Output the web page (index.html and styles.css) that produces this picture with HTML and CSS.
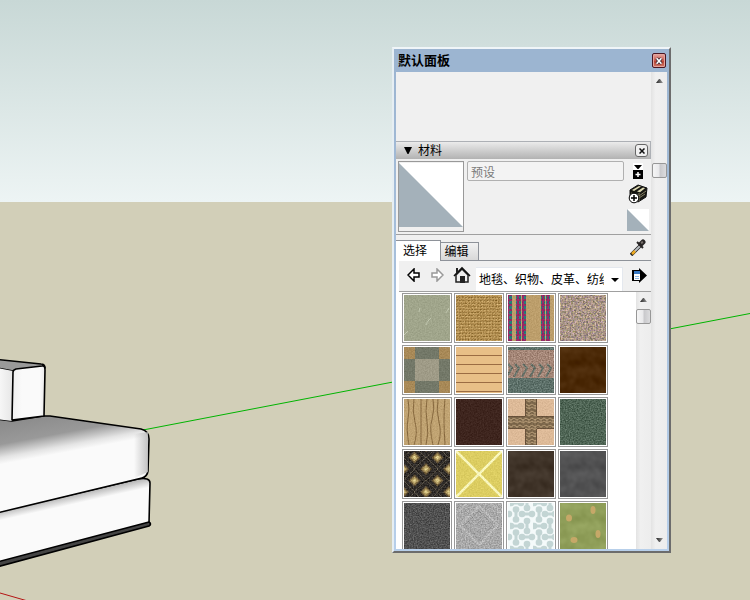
FILE: index.html
```html
<!DOCTYPE html>
<html lang="zh-CN">
<head>
<meta charset="utf-8">
<title>默认面板</title>
<link rel="stylesheet" href="styles.css">
</head>
<body>
<svg class="scene" viewBox="0 0 750 600" preserveAspectRatio="xMinYMin slice" aria-hidden="true">
  <defs>
    <linearGradient id="sky" x2="0" y2="1"><stop stop-color="#c8d8d6"/><stop offset="1" stop-color="#edf4f4"/></linearGradient>
    <linearGradient id="cushion" gradientUnits="userSpaceOnUse" x1="0" y1="420" x2="8" y2="463"><stop stop-color="#8a8a8a"/><stop offset=".55" stop-color="#999"/><stop offset=".85" stop-color="#e4e4e4"/><stop offset="1" stop-color="#fafafa"/></linearGradient>
    <linearGradient id="side" x2="1"><stop stop-color="#f0f0f0"/><stop offset=".3" stop-color="#fafafa"/><stop offset=".85" stop-color="#fafafa"/><stop offset="1" stop-color="#e8e8e8"/></linearGradient>
    <linearGradient id="face"><stop stop-color="#fafafa"/><stop offset="1" stop-color="#e6e6e6"/></linearGradient>
    <linearGradient id="base" gradientUnits="userSpaceOnUse" x1="0" y1="511" x2="2" y2="520"><stop stop-color="#b8b8b8"/><stop offset="1" stop-color="#fafafa"/></linearGradient>
    <linearGradient id="edge" gradientUnits="userSpaceOnUse" x1="134" y1="0" x2="150" y2="0"><stop stop-color="#bbb" stop-opacity="0"/><stop offset="1" stop-color="#bbb"/></linearGradient>
  </defs>
  <path fill="#d2cfb8" d="M0 0h750v600H0z"/>
  <path fill="url(#sky)" d="M0 0h750v202H0z"/>
  <path stroke="#00b400" d="M143 430 750 313.500"/>
  <path stroke="#b41414" d="M0 593 26 600.500"/>
  <g stroke="#000" stroke-width="1.600" stroke-linejoin="round">
    <path fill="url(#base)" d="M-3 512 138 479Q150 477 150 483L149 523-3 563z"/>
    <path fill="#444" d="M-3 562 149 522Q152 524 149 526L-3 567z"/>
    <path fill="url(#cushion)" d="M-3 419 12 421 43 416 50 416 141 429Q149 431 149 439L148 471Q147 477 142 478L-3 513z"/>
    <path fill="url(#edge)" stroke="none" d="M134 434 148 432V472L134 478z"/>
    <path fill="#999" d="M-3 359.500 41 364Q45 364 45 368L13 371-3 368z"/>
    <path fill="url(#face)" stroke="none" d="M-3 368 13 371 12 421-3 419z"/>
    <path fill="url(#side)" d="M16 369 42 366Q45 365 45 370L44 416 12 420 13 372Q13 370 16 369z"/>
  </g>
</svg>

<svg class="defs" aria-hidden="true">
  <defs>
    <filter id="fine" x="0" y="0" width="1" height="1" color-interpolation-filters="sRGB"><feTurbulence type="fractalNoise" baseFrequency=".7" numOctaves="2" seed="4"/><feColorMatrix values="1 0 0 0 0 1 0 0 0 0 1 0 0 0 0 0 0 0 0 1" result="n"/><feComposite in="SourceGraphic" in2="n" operator="arithmetic" k2="1" k3=".14" k4="-.07"/></filter>
    <filter id="coarse" x="0" y="0" width="1" height="1" color-interpolation-filters="sRGB"><feTurbulence type="fractalNoise" baseFrequency=".75" numOctaves="2" seed="8"/><feColorMatrix values="1 0 0 0 0 1 0 0 0 0 1 0 0 0 0 0 0 0 0 1" result="n"/><feComposite in="SourceGraphic" in2="n" operator="arithmetic" k2="1" k3=".36" k4="-.18"/></filter>
    <filter id="speckle" x="0" y="0" width="1" height="1" color-interpolation-filters="sRGB"><feTurbulence type="fractalNoise" baseFrequency=".6" numOctaves="2" seed="3"/><feColorMatrix values="1 .2 0 0 -.1 .8 .4 0 0 -.1 .7 0 .5 0 -.1 0 0 0 0 1" result="n"/><feComposite in="SourceGraphic" in2="n" operator="arithmetic" k2="1" k3=".7" k4="-.35"/></filter>
    <filter id="cloud" x="0" y="0" width="1" height="1" color-interpolation-filters="sRGB"><feTurbulence type="fractalNoise" baseFrequency=".1" numOctaves="2" seed="5"/><feColorMatrix values="1 0 0 0 0 1 0 0 0 0 1 0 0 0 0 0 0 0 0 1" result="n"/><feComposite in="SourceGraphic" in2="n" operator="arithmetic" k2="1" k3=".12" k4="-.06"/></filter>
    <pattern id="weave" width="3" height="3" patternUnits="userSpaceOnUse"><path fill="#b28e51" d="M0 0h3v3H0z"/><path fill="#99783d" d="M0 2h2v1H0z"/><path fill="#c3a163" d="M1 0h2v1H1z"/></pattern>
    <pattern id="band" width="5" height="5" patternUnits="userSpaceOnUse"><path fill="#952a65" d="M0 0h5v5H0z"/><path fill="#277b78" d="M1 1h3v3H1z"/></pattern>
    <pattern id="diamond" width="23" height="23" x="-1" y="-5" patternUnits="userSpaceOnUse">
      <path fill="#302c29" d="M0 0h23v23H0z"/>
      <path stroke="#665d4c" stroke-dasharray="2 1" d="M0 11 12 23M11 0 23 12M0 12 12 0M11 23 23 11"/>
      <path fill="#6b5838" d="m11.500 5.500 6 6-6 6-6-6zM0-6l6 6-6 6-6-6zM23-6l6 6-6 6-6-6zM0 17l6 6-6 6-6-6zM23 17l6 6-6 6-6-6z"/>
      <path fill="#b09a5f" d="m11.500 7.500 4 4-4 4-4-4zM0-4l4 4-4 4-4-4zM23-4l4 4-4 4-4-4zM0 19l4 4-4 4-4-4zM23 19l4 4-4 4-4-4z"/>
      <path fill="#dcca8a" d="m11.500 9.500 2 2-2 2-2-2zM0-2l2 2-2 2-2-2zM23-2l2 2-2 2-2-2zM0 21l2 2-2 2-2-2zM23 21l2 2-2 2-2-2z"/>
    </pattern>
    <g id="bone"><path stroke="#c3d5d4" stroke-width="3" d="M-5 0H5"/><circle cx="-5" r="3.300"/><circle cx="5" r="3.300"/></g>
    <pattern id="bones" width="23" height="23" x="2" y="0" patternUnits="userSpaceOnUse">
      <path fill="#f4fafa" d="M0 0h23v23H0z"/>
      <g fill="#c3d5d4">
        <use href="#bone" x="6" y="0"/><use href="#bone" x="6" y="23"/>
        <use href="#bone" x="17" y="11"/><use href="#bone" x="-6" y="11"/>
        <use href="#bone" transform="translate(6 11.500) rotate(90)"/>
        <use href="#bone" transform="translate(17 0) rotate(90)"/>
        <use href="#bone" transform="translate(17 23) rotate(90)"/>
      </g>
    </pattern>
    <pattern id="braid" width="6" height="7" patternUnits="userSpaceOnUse"><path fill="#7b664a" d="M0 0h6v7H0z"/><path fill="none" stroke="#b79c78" d="m0 1 3 2 3-2M0 5l3 2 3-2M3 0v2"/></pattern>
    <linearGradient id="arrow" x2="1"><stop stop-color="#222"/><stop offset="1" stop-color="#999"/></linearGradient>
    <symbol id="up" viewBox="0 0 7 4"><path fill="url(#arrow)" d="M3 0h1l3 4H0z"/></symbol>
    <symbol id="down" viewBox="0 0 7 4"><path fill="url(#arrow)" d="M0 0h7L4 4H3z"/></symbol>
  </defs>
</svg>

<main class="panel">
  <header class="titlebar">
    <h1>默认面板</h1>
    <button class="close" aria-label="关闭"><svg viewBox="0 0 10 9"><path stroke="#3a2530" stroke-width="4" d="m2 1 6 7m0-7L2 8"/><path stroke="#fff" stroke-width="2" d="m2 1 6 7m0-7L2 8"/></svg></button>
  </header>
  <div class="body">
    <div class="content">
      <div class="blank"></div>
      <div class="section">
        <svg class="fold" viewBox="0 0 8 7"><path d="M0 0h8L4.500 7h-1z"/></svg>
        <h2>材料</h2>
        <button class="dismiss" aria-label="关闭材料"><svg viewBox="0 0 6 6"><path stroke="#111" stroke-width="1.500" d="m.5.5 5 5m0-5-5 5"/></svg></button>
      </div>
      <section class="current">
        <div class="preview"><svg viewBox="0 0 64 65" preserveAspectRatio="none"><path fill="#fff" d="M0 0h64v65H0z"/><path fill="#a4b1ba" d="M0 0 64 65H0z"/></svg></div>
        <input class="name" type="text" value="预设" aria-label="材料名称" disabled>
        <div class="actions">
          <button aria-label="显示辅助面板"><svg width="12" height="16" viewBox="0 0 12 16"><path fill="#fff" d="M1 0h10v7H1z"/><path fill="#000" d="M2 2h8L6.500 6h-1zM1 7h10v9H1z"/><path stroke="#fff" stroke-width="1.500" d="M6 9v5M3.500 11.500h5"/></svg></button>
          <button aria-label="创建材料"><svg width="20" height="21" viewBox="0 0 20 21"><path fill="#171713" stroke="#111" d="m2 6 8-5 9 3-1 9-8 5-8-4z"/><path fill="#dedab3" d="m4 6 7-4 2 .6-7 4.400zM9 7.500l6-4 2 .7-5 4z"/><path fill="none" stroke="#858064" d="m3 9 8 3 7-5M11 14l6-4M11 9v8"/><circle cx="6" cy="14" r="4.800" fill="#fff" stroke="#000"/><path stroke="#000" stroke-width="1.500" d="M6 11v6M3 14h6"/></svg></button>
          <button aria-label="默认材料"><svg width="22" height="22" viewBox="0 0 22 22"><path fill="#fff" d="M0 0h22v22H0z"/><path fill="#a4b1ba" d="M0 0 22 22H0z"/></svg></button>
        </div>
      </section>
      <nav class="tabs">
        <button class="tab active">选择</button><button class="tab">编辑</button>
        <button class="dropper" aria-label="提取材质"><svg width="16" height="17" viewBox="0 0 16 17"><path stroke="#222" stroke-width="3.500" d="M1 16 10 7"/><path stroke="#b9bec3" stroke-width="2" d="M3 14 10 7"/><path stroke="#efaa20" stroke-width="2.500" d="m2 15 3-3"/><path stroke="#292626" stroke-width="2" d="m7 3 6 6"/><path stroke="#292626" stroke-width="5" stroke-linecap="round" d="m11 5 2-2"/><path stroke="#77706c" stroke-width="2" d="m11 4 2-1"/></svg></button>
      </nav>
      <div class="library">
        <div class="toolbar">
          <button aria-label="后退"><svg width="14" height="14" viewBox="0 0 14 14"><path fill="#fff" stroke="#000" stroke-width="1.500" d="m1 7 6-6v4h5v4H7v4z"/></svg></button>
          <button aria-label="前进"><svg width="14" height="14" viewBox="0 0 14 14"><path fill="#fff" stroke="#999" stroke-width="1.500" d="M13 7 7 1v4H2v4h5v4z"/></svg></button>
          <button aria-label="在模型中"><svg width="18" height="18" viewBox="0 0 18 18"><path fill="#eee" stroke="#222" stroke-width="1.500" d="M3 9v7h12V9L9 3z"/><path fill="none" stroke="#111" stroke-width="1.600" d="m1 10 8-8 8 8"/><path fill="#222" d="M3 2h2v4L3 8zM7 10h5v7H7z"/></svg></button>
          <div class="picker"><select aria-label="材料库"><option>地毯、织物、皮革、纺织品和墙纸</option></select><svg class="caret" viewBox="0 0 8 4"><path d="M0 0h8L4 4z"/></svg></div>
          <button class="details" aria-label="详细信息"><svg width="15" height="15" viewBox="0 0 15 15"><path d="M7 0v2H0v11h7v2l8-7.500z"/><path fill="#fff" d="M2 3h6v9H2z"/><path fill="#3779c5" d="M2 3h6v3H2z"/><path stroke="#8bb9e8" d="M3 8.500h4M3 10.500h4"/></svg></button>
        </div>
        <div class="browser">
          <div class="swatches">
            <button aria-label="浅绿地毯"><svg viewBox="0 0 46 46"><g filter="url(#fine)"><path fill="#a0a58b" d="M0 0h46v46H0z"/><path fill="none" stroke="#c1c7af" d="m22 30 2-4 3-3M15 17l1-4M42 18l3-5M0 40l4-4"/></g></svg></button>
            <button aria-label="编织地毯"><svg viewBox="0 0 46 46"><path filter="url(#coarse)" fill="url(#weave)" d="M0 0h46v46H0z"/></svg></button>
            <button aria-label="条纹织物"><svg viewBox="0 0 46 46"><g filter="url(#fine)"><path fill="#bc9e6b" d="M0 0h46v46H0z"/><path fill="url(#band)" d="M0 0h4v46H0zM8 0h5v46H8zM14 0h4v46h-4zM33 0h4v46h-4zM38 0h4v46h-4z"/></g></svg></button>
            <button aria-label="斑点地毯"><svg viewBox="0 0 46 46"><path filter="url(#speckle)" fill="#a99587" d="M0 0h46v46H0z"/></svg></button>
            <button aria-label="方格地毯"><svg viewBox="0 0 46 46"><g filter="url(#fine)"><path fill="#a88957" d="M0 0h46v46H0z"/><path fill="#737868" d="M11 0h24v46H11zM0 12h46v22H0z"/><path fill="#9f9b87" d="M11 12h24v22H11z"/></g></svg></button>
            <button aria-label="横纹墙纸"><svg viewBox="0 0 46 46"><path fill="#e8bf87" d="M0 0h46v46H0z"/><path stroke="#9b6c43" d="M0 8.500h46M0 17.500h46M0 26.500h46M0 35.500h46M0 44.500h46"/></svg></button>
            <button aria-label="花纹地毯"><svg viewBox="0 0 46 46"><g filter="url(#coarse)"><path fill="#a58778" d="M0 0h46v46H0z"/><path fill="#5d7069" d="M0 0h46v3H0zM0 31h46v15H0z"/><path fill="none" stroke="#667168" stroke-width="2" d="m0 17 4 4-4 7M7 17l4 4-5 9M15 17l4 4-5 9M23 17l4 4-5 9M31 17l4 4-5 9M39 17l4 4-5 9"/></g></svg></button>
            <button aria-label="棕色皮革"><svg viewBox="0 0 46 46"><path filter="url(#cloud)" fill="#4b2907" d="M0 0h46v46H0z"/></svg></button>
            <button aria-label="木纹墙纸"><svg viewBox="0 0 46 46"><g filter="url(#fine)"><path fill="#c0a372" d="M0 0h46v46H0z"/><path fill="none" stroke="#87693f" d="M4 0q2 10 0 20t1 26M10 0q-2 12 1 23t-1 23M17 0v46M23 0q-2 12 0 23t-1 23M29 0q2 10-1 20t1 26M34 0q-2 12 1 23t-1 23M41 0q-2 18 0 46"/></g></svg></button>
            <button aria-label="深棕皮革"><svg viewBox="0 0 46 46"><path filter="url(#fine)" fill="#3e251e" d="M0 0h46v46H0z"/></svg></button>
            <button aria-label="十字花纹"><svg viewBox="0 0 46 46"><g filter="url(#fine)"><path fill="#ddba98" d="M0 0h46v46H0z"/><path fill="url(#braid)" d="M17 0h12v46H17zM0 17h46v13H0z"/><path stroke="#68513a" d="M17.500 0v17M28.500 0v17M17.500 30v16M28.500 30v16M0 17.500h17M0 29.500h17M29 17.500h17M29 29.500h17"/></g></svg></button>
            <button aria-label="深绿地毯"><svg viewBox="0 0 46 46"><path filter="url(#coarse)" fill="#4f6555" d="M0 0h46v46H0z"/></svg></button>
            <button aria-label="菱形地毯"><svg viewBox="0 0 46 46"><path filter="url(#coarse)" fill="url(#diamond)" d="M0 0h46v46H0z"/></svg></button>
            <button aria-label="黄色织物"><svg viewBox="0 0 46 46"><g filter="url(#fine)"><path fill="#dccd61" d="M0 0h46v46H0z"/><path stroke="#f8f6bd" stroke-width="2.500" d="m0 0 46 46M46 0 0 46"/></g></svg></button>
            <button aria-label="黑棕皮革"><svg viewBox="0 0 46 46"><path filter="url(#cloud)" fill="#403429" d="M0 0h46v46H0z"/></svg></button>
            <button aria-label="灰色皮革"><svg viewBox="0 0 46 46"><path filter="url(#cloud)" fill="#525253" d="M0 0h46v46H0z"/></svg></button>
            <button aria-label="深灰地毯"><svg viewBox="0 0 46 46"><path filter="url(#coarse)" fill="#515151" d="M0 0h46v46H0z"/></svg></button>
            <button aria-label="浅灰地毯"><svg viewBox="0 0 46 46"><g filter="url(#coarse)"><path fill="#a8a8a8" d="M0 0h46v46H0z"/><path fill="none" stroke="#b8b8b8" stroke-width="2" d="m23 3 19 19-19 20L4 22zM0 11 11 0M35 0l11 11"/><path fill="none" stroke="#989898" d="m23 8 14 14-14 15L9 22z"/></g></svg></button>
            <button aria-label="骨形花纹"><svg viewBox="0 0 46 46"><path fill="url(#bones)" d="M0 0h46v46H0z"/></svg></button>
            <button aria-label="落叶地毯"><svg viewBox="0 0 46 46"><path filter="url(#cloud)" fill="#8f9e59" d="M0 0h46v46H0z"/><g fill="#c6a868"><ellipse cx="33" cy="7" rx="2.500" ry="4"/><ellipse cx="9" cy="15" rx="3" ry="3.500"/><ellipse cx="38" cy="31" rx="2.500" ry="4"/><ellipse cx="14" cy="37" rx="3.500" ry="3"/></g></svg></button>
          </div>
          <div class="scrollbar inner"><svg class="tip"><use href="#up"/></svg><div class="thumb"></div></div>
        </div>
      </div>
    </div>
    <div class="scrollbar outer"><svg class="tip"><use href="#up"/></svg><div class="thumb"></div><svg class="tip end"><use href="#down"/></svg></div>
  </div>
</main>
</body>
</html>
```
FILE: styles.css
```css
* { box-sizing: border-box; }

body {
  margin: 0;
  height: 100vh;
  overflow: hidden;
  position: relative;
  font: 12px/16px "Liberation Sans", "Noto Sans CJK SC", sans-serif;
  color: #000;
}

button, input, select { font: inherit; color: inherit; margin: 0; }
button { padding: 0; border: 0; background: none; }
svg { display: block; fill: none; }
h1, h2 { margin: 0; }

.scene { width: 100%; height: 100%; }
.defs { position: absolute; width: 0; height: 0; }
.fold, .caret, .details svg { fill: #000; }

.panel {
  position: absolute;
  top: 47px;
  right: 79px;
  bottom: 47px;
  width: 279px;
  display: flex;
  flex-direction: column;
  border: 2px solid;
  border-color: #f0f5f8 #6c6c6c #6c6c6c #e6eef3;
  background: linear-gradient(#9cb5d1 24px, #b7cfea);
  padding: 0 2px 2px;
}

.titlebar {
  display: flex;
  flex: none;
  align-items: center;
  justify-content: space-between;
  height: 23px;
  padding: 0 1px 0 2px;
}
.titlebar h1 { padding-top: 1px; font-size: 13px; font-weight: 700; }

.close {
  width: 14px;
  height: 15px;
  display: grid;
  place-items: center;
  border: 1px solid #4a1723;
  border-radius: 2px;
  background: linear-gradient(#e5aaa4, #c9584c 50%, #b83e2e 51%, #d2796a);
  box-shadow: inset 0 0 0 1px #e3a49d;
}
.close svg { width: 8px; height: 8px; }

.body { display: flex; flex: 1; min-height: 0; background: #f0f0f0; }
.content { display: flex; flex: 1; min-width: 0; flex-direction: column; }
.blank { flex: none; height: 69px; }

.section {
  display: flex;
  flex: none;
  align-items: center;
  height: 18px;
  padding: 0 2px 0 8px;
  border: 1px solid #adb0b5;
  border-width: 1px 1px 0 0;
  background: linear-gradient(#ebebeb, #b2b2b2);
}
.fold { width: 8px; height: 7px; }
.section h2 { margin-left: 6px; font-size: 12px; font-weight: 400; }
.dismiss {
  width: 13px;
  height: 13px;
  margin-left: auto;
  display: grid;
  place-items: center;
  border: 1px solid #666;
  border-radius: 3px;
  background: #f0f0f0;
}
.dismiss svg { width: 6px; height: 6px; }

.current {
  display: flex;
  flex: none;
  align-items: flex-start;
  height: 76px;
  padding: 2px;
  gap: 3px;
  border-bottom: 1px solid #a0a0a0;
}
.preview { width: 66px; height: 71px; border: 1px solid #999; padding: 1px 0 4px; }
.preview svg { width: 100%; height: 100%; }
.name {
  flex: 1;
  min-width: 0;
  height: 20px;
  padding: 0 3px;
  border: 1px solid #b0b0b0;
  border-radius: 2px;
  background: #f3f3f3;
  color: #7a7a7a;
}
.actions {
  display: flex;
  flex-direction: column;
  align-items: center;
  justify-content: space-between;
  height: 71px;
  padding: 2px 0 1px;
}

.tabs {
  display: flex;
  flex: none;
  align-items: flex-end;
  height: 26px;
  box-shadow: inset 0 -1px #8e9299;
}
.tab { width: 38px; height: 19px; padding-right: 6px; border: 1px solid #8e9299; border-left: 0; background: linear-gradient(#f2f2f2, #d8d8d8); }
.tab.active { width: 45px; height: 21px; border-bottom: 0; background: #fff; }
.dropper { margin: 0 5px 5px auto; }

.library { display: flex; flex: 1; min-height: 0; flex-direction: column; padding-left: 3px; background: #fff; }
.toolbar {
  display: flex;
  flex: none;
  align-items: center;
  gap: 9px;
  height: 31px;
  padding: 0 4px 0 8px;
  border-bottom: 1px solid #a0a0a0;
  background: #f0f0f0;
}
.toolbar > button { padding-bottom: 2px; }
.picker { position: relative; flex: 1; min-width: 0; align-self: flex-end; margin-left: -4px; }
.picker select {
  display: block;
  appearance: none;
  width: 100%;
  height: 24px;
  padding: 0 18px 0 3px;
  border: 1px solid #e4e8ee;
  border-width: 1px 1px 0 0;
  border-radius: 0;
  background: #fff;
}
.caret { position: absolute; right: 4px; top: 11px; width: 8px; height: 4px; pointer-events: none; }

.browser { display: flex; flex: 1; min-height: 0; overflow: hidden; }
.swatches {
  display: grid;
  flex: 1;
  grid-template-columns: repeat(auto-fill, 50px);
  grid-auto-rows: 50px;
  gap: 2px;
  padding: 1px 3px;
}
.swatches button { border: 1px solid #999; padding: 1px; }
.swatches svg { width: 46px; height: 46px; }

.scrollbar {
  display: flex;
  flex: none;
  flex-direction: column;
  align-items: center;
  width: 15px;
  background: linear-gradient(90deg, #e3e3e3, #f0f0f0 30%, #ededed);
}
.outer { width: 16px; }
.tip { flex: none; width: 7px; height: 4px; margin-top: 6px; }
.outer .tip { margin-top: 7px; }
.outer .tip.end { margin: auto 0 7px; }
.thumb {
  width: 15px;
  height: 15px;
  margin-top: 7px;
  border: 1px solid #979797;
  border-radius: 2px;
  background: linear-gradient(90deg, #f5f5f5, #e9e9eb 45%, #c9c9cc 55%, #dcdcde);
}
.outer .thumb { margin-top: 80px; }
```
